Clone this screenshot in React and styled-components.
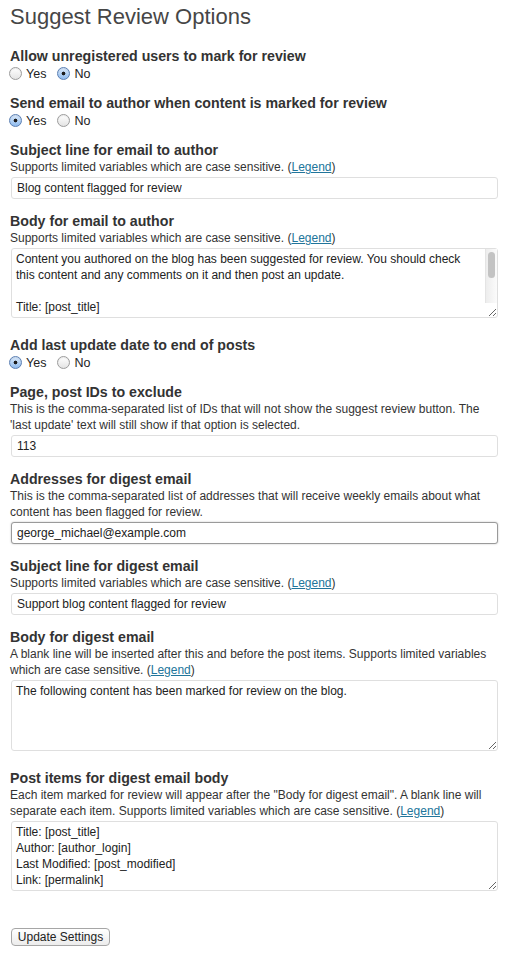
import React from "react";
import styled, { createGlobalStyle } from "styled-components";

const GlobalStyle = createGlobalStyle`
  body {
    margin: 0;
    background: #fff;
    font-family: "Liberation Sans", Arial, sans-serif;
    color: #333;
  }
`;

const Page = styled.form`
  width: 488px;
  padding: 2px 10px 10px 10px;
`;

const Title = styled.h2`
  margin: 0;
  font-size: 22px;
  line-height: 30px;
  font-weight: normal;
  color: #464646;
`;

const Field = styled.div`
  margin-top: ${({ $gap }) => $gap}px;
`;

const Label = styled.div`
  font-size: 14.2px;
  line-height: 17px;
  font-weight: bold;
  color: #333;
`;

const Desc = styled.div`
  font-size: 12px;
  line-height: 16px;
  color: #333;

  a {
    color: #21759b;
    text-decoration: underline;
  }
`;

const RadioRow = styled.div`
  display: flex;
  align-items: center;
  height: 17px;
  font-size: 12.5px;
`;

const Option = styled.label`
  display: inline-flex;
  align-items: center;
  margin-right: 12px;
  margin-left: -1px;
  color: #222;
`;

const Radio = styled.input.attrs({ type: "radio" })`
  appearance: none;
  box-sizing: border-box;
  width: 13px;
  height: 13px;
  margin: 0 4px 0 0;
  border-radius: 50%;
  border: 1px solid #9c9c9c;
  background: linear-gradient(#ffffff, #e4e4e4);
  box-shadow: inset 0 1px 1px rgba(0, 0, 0, 0.08);

  &:checked {
    border-color: #5b7fb3;
    background: radial-gradient(circle, #1c1c1c 0 1.6px, transparent 2.2px),
      linear-gradient(#dbeafb, #8fbbee);
  }
`;

const TextInput = styled.input.attrs({ type: "text" })`
  display: block;
  box-sizing: border-box;
  width: 487px;
  height: 22px;
  margin: 2px 0 0 1px;
  padding: 2px 5px;
  border: 1px solid ${({ $focused }) => ($focused ? "#9a9a9a" : "#dfdfdf")};
  border-radius: 3px;
  box-shadow: ${({ $focused }) =>
    $focused ? "0 0 2px rgba(0, 0, 0, 0.25)" : "none"};
  font-family: "Liberation Sans", Arial, sans-serif;
  font-size: 12px;
  color: #222;
  background: #fff;
  outline: none;
`;

const AreaWrap = styled.div`
  position: relative;
  width: 487px;
  margin: 2px 0 0 1px;
`;

const TextArea = styled.textarea`
  display: block;
  box-sizing: border-box;
  width: 487px;
  height: ${({ $h }) => $h || 70}px;
  margin: 0;
  padding: 2px ${({ $scroll }) => ($scroll ? 16 : 4)}px 2px 4px;
  border: 1px solid #dfdfdf;
  border-radius: 3px;
  font-family: "Liberation Sans", Arial, sans-serif;
  font-size: 12px;
  line-height: 16px;
  color: #222;
  background: #fff;
  outline: none;
  overflow: hidden;
`;

/* fake aqua scrollbar drawn over the right edge of the textarea */
const ScrollTrack = styled.div`
  position: absolute;
  top: 1px;
  right: 1px;
  width: 11px;
  height: 54px;
  border-left: 1px solid #e4e4e4;
  background: linear-gradient(to right, #ededed, #fbfbfb);
  pointer-events: none;
`;

const ScrollThumb = styled.div`
  margin: 3px 0 0 2px;
  width: 7px;
  height: 26px;
  border-radius: 4px;
  background: #c3c3c3;
`;

const Button = styled.button`
  box-sizing: border-box;
  width: 99px;
  height: 18px;
  margin-left: 1px;
  padding: 0;
  border: 1px solid #a6a6a6;
  border-radius: 4px;
  background: linear-gradient(#ffffff, #ececec);
  font-family: "Liberation Sans", Arial, sans-serif;
  font-size: 12px;
  line-height: 16px;
  color: #222;
`;

const Legend = () => (
  <>
    (<a href="#legend">Legend</a>)
  </>
);

const YesNo = ({ name, value }) => (
  <RadioRow>
    <Option>
      <Radio name={name} defaultChecked={value === "yes"} />
      Yes
    </Option>
    <Option>
      <Radio name={name} defaultChecked={value === "no"} />
      No
    </Option>
  </RadioRow>
);

const authorBody =
  "Content you authored on the blog has been suggested for review. You should check this content and any comments on it and then post an update.\n\nTitle: [post_title]\nLink: [permalink]\nLast Modified: [post_modified]\n\nFeedback:\n[feedback]";

const itemsBody =
  "Title: [post_title]\nAuthor: [author_login]\nLast Modified: [post_modified]\nLink: [permalink]";

export default function App() {
  return (
    <>
      <GlobalStyle />
      <Page onSubmit={(e) => e.preventDefault()}>
        <Title>Suggest Review Options</Title>

        <Field $gap={16}>
          <Label>Allow unregistered users to mark for review</Label>
          <YesNo name="unregistered" value="no" />
        </Field>

        <Field $gap={13}>
          <Label>Send email to author when content is marked for review</Label>
          <YesNo name="send_author" value="yes" />
        </Field>

        <Field $gap={13}>
          <Label>Subject line for email to author</Label>
          <Desc>
            Supports limited variables which are case sensitive. <Legend />
          </Desc>
          <TextInput defaultValue="Blog content flagged for review" />
        </Field>

        <Field $gap={14}>
          <Label>Body for email to author</Label>
          <Desc>
            Supports limited variables which are case sensitive. <Legend />
          </Desc>
          <AreaWrap>
            <TextArea $scroll defaultValue={authorBody} />
            <ScrollTrack>
              <ScrollThumb />
            </ScrollTrack>
          </AreaWrap>
        </Field>

        <Field $gap={19}>
          <Label>Add last update date to end of posts</Label>
          <YesNo name="last_update" value="yes" />
        </Field>

        <Field $gap={13}>
          <Label>Page, post IDs to exclude</Label>
          <Desc>
            This is the comma-separated list of IDs that will not show the
            suggest review button. The
            <br />
            'last update' text will still show if that option is selected.
          </Desc>
          <TextInput defaultValue="113" />
        </Field>

        <Field $gap={14}>
          <Label>Addresses for digest email</Label>
          <Desc>
            This is the comma-separated list of addresses that will receive
            weekly emails about what
            <br />
            content has been flagged for review.
          </Desc>
          <TextInput $focused defaultValue="george_michael@example.com" />
        </Field>

        <Field $gap={14}>
          <Label>Subject line for digest email</Label>
          <Desc>
            Supports limited variables which are case sensitive. <Legend />
          </Desc>
          <TextInput defaultValue="Support blog content flagged for review" />
        </Field>

        <Field $gap={14}>
          <Label>Body for digest email</Label>
          <Desc>
            A blank line will be inserted after this and before the post items.
            Supports limited variables
            <br />
            which are case sensitive. <Legend />
          </Desc>
          <AreaWrap>
            <TextArea
              $h={71}
              defaultValue="The following content has been marked for review on the blog."
            />
          </AreaWrap>
        </Field>

        <Field $gap={19}>
          <Label>Post items for digest email body</Label>
          <Desc>
            Each item marked for review will appear after the "Body for digest
            email". A blank line will
            <br />
            separate each item. Supports limited variables which are case
            sensitive. <Legend />
          </Desc>
          <AreaWrap>
            <TextArea defaultValue={itemsBody} />
          </AreaWrap>
        </Field>

        <Field $gap={36}>
          <Button type="submit">Update Settings</Button>
        </Field>
      </Page>
    </>
  );
}
